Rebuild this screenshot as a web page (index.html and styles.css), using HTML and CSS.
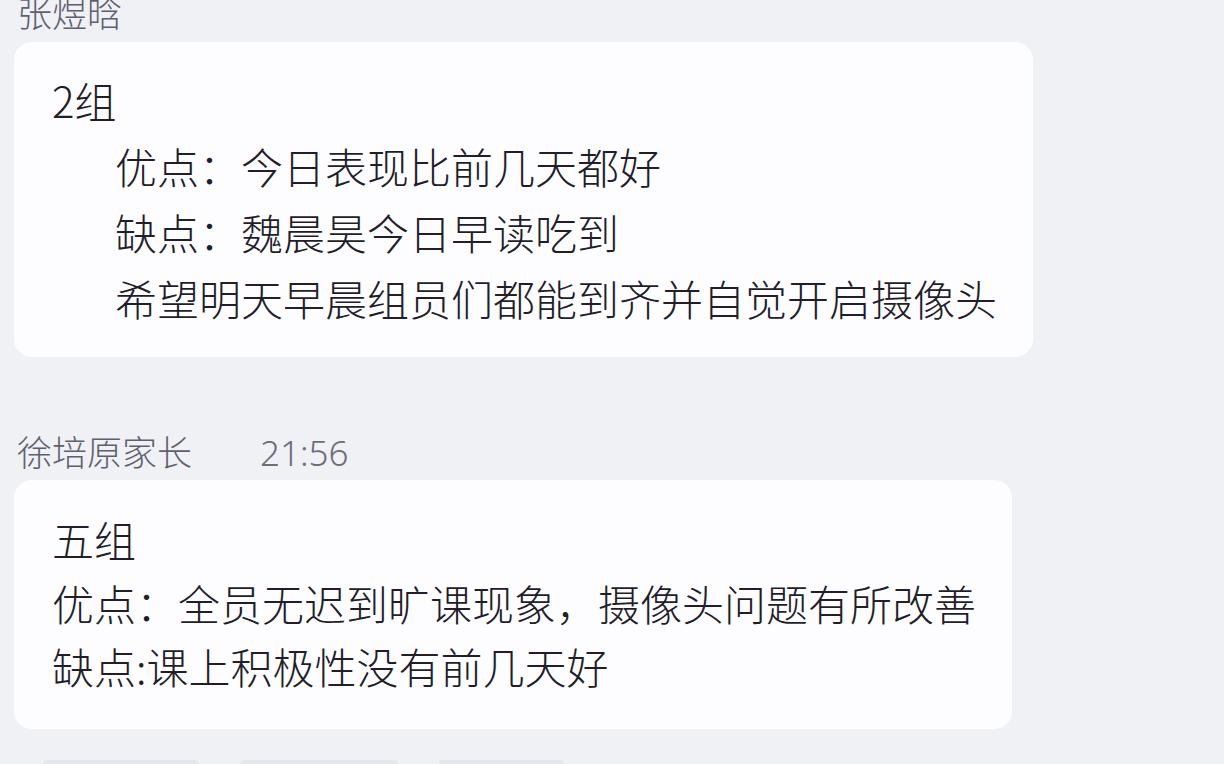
FILE: index.html
```html
<!DOCTYPE html>
<html lang="zh-CN">
<head>
  <meta charset="UTF-8">
  <meta name="viewport" content="width=device-width, initial-scale=1.0">
  <title>群聊记录</title>
  <link rel="stylesheet" href="styles.css">
</head>
<body>
  <div class="chat">
    <div class="sender first">张煜晗</div>
    <div class="bubble wide">
      <p class="title">2组</p>
      <div class="indent">
        <p>优点：今日表现比前几天都好</p>
        <p>缺点：魏晨昊今日早读吃到</p>
        <p>希望明天早晨组员们都能到齐并自觉开启摄像头</p>
      </div>
    </div>

    <div class="sender">徐培原家长<span class="time">21:56</span></div>
    <div class="bubble narrow">
      <p class="title">五组</p>
      <p>优点：全员无迟到旷课现象，摄像头问题有所改善</p>
      <p>缺点:课上积极性没有前几天好</p>
    </div>

    <div class="chips">
      <span class="chip c1"></span>
      <span class="chip c2"></span>
      <span class="chip c3"></span>
    </div>
  </div>
</body>
</html>
```

FILE: styles.css
```css
body {
  margin: 0;
  background-color: #eff1f5;
  font-family: "Noto Sans CJK SC", "Noto Sans", sans-serif;
  font-weight: 300;
  color: #231d2a;
  overflow: hidden;
}
.chat {
  display: flex;
  flex-direction: column;
  align-items: flex-start;
  height: 764px;
}
.sender {
  margin-left: 17px;
  font-size: 35px;
  line-height: 35px;
  color: #625f6d;
  margin-top: 76px;
  margin-bottom: 10px;
}
.sender.first {
  margin-top: -6px;
  margin-bottom: 13px;
}
.time {
  margin-left: 68px;
  font-family: "Noto Sans", sans-serif;
  font-size: 35px;
  color: #6f6c79;
}
.bubble {
  margin-left: 14px;
  background-color: #fdfdff;
  border-radius: 18px;
  padding-left: 38px;
  box-sizing: border-box;
}
.bubble p {
  margin: 0;
  font-size: 42px;
}
.bubble.wide {
  width: 1019px;
  padding-top: 25px;
  padding-bottom: 26px;
}
.bubble.wide p {
  line-height: 66px;
}
.bubble.narrow {
  width: 998px;
  padding-top: 27px;
  padding-bottom: 31px;
}
.bubble.narrow p {
  line-height: 63.5px;
}
.indent {
  padding-left: 63px;
}
.chips {
  display: flex;
  margin-top: 31px;
  margin-left: 43px;
  gap: 41px;
}
.chip {
  height: 8px;
  border-radius: 4px;
  background-color: #e6e7ec;
}
.c1 { width: 156px; }
.c2 { width: 158px; }
.c3 { width: 125px; }
```
